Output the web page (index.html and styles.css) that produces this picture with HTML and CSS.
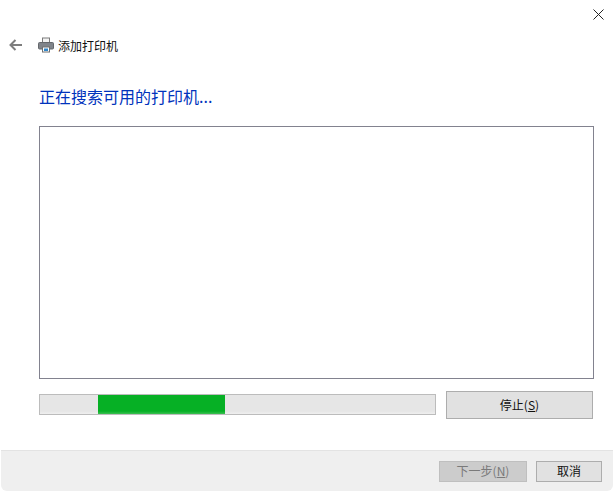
FILE: index.html
```html
<html>
<head>
  <meta charset="utf-8">
  <link rel="stylesheet" href="styles.css">
</head>
<body>
  <div class="dialog">
    <div class="close-row">
      <svg class="close" width="11" height="11" viewBox="0 0 11 11"><path d="M.5.5l10 10M10.5.5l-10 10" stroke="#222" stroke-width="1" fill="none"/></svg>
    </div>
    <div class="nav">
      <svg class="back" width="14" height="12" viewBox="0 0 14 12"><path d="M6.5 1L1.5 6l5 5M1.5 6H13" stroke="#7d7d7d" stroke-width="2" fill="none"/></svg>
      <svg class="printer" width="16" height="16" viewBox="0 0 16 16">
        <rect x="4.5" y="1" width="7" height="5" fill="#f4f4f4" stroke="#7a7a7a"/>
        <rect x=".5" y="5.5" width="15" height="6.5" rx="1" fill="#80848a" stroke="#65686c"/>
        <rect x="4.5" y="10" width="7" height="5" fill="#fff" stroke="#707070"/>
        <rect x="6" y="11.5" width="4" height="2.5" fill="#2f86c9"/>
      </svg>
      <span class="nav-title">添加打印机</span>
    </div>
    <div class="heading">正在搜索可用的打印机...</div>
    <div class="list"></div>
    <div class="status-row">
      <div class="progress">
        <div class="progress-fill"></div>
      </div>
      <div class="btn stop">停止(<u>S</u>)</div>
    </div>
    <div class="footer">
      <div class="btn next">下一步(<u>N</u>)</div>
      <div class="btn cancel">取消</div>
    </div>
  </div>
</body>
</html>
```

FILE: styles.css
```css
body {
  margin: 0;
  background-color: white;
  font-family: "Noto Sans CJK SC", "Liberation Sans", sans-serif;
  color: #111;
}
.dialog {
  width: 614px;
  height: 492px;
  overflow: hidden;
}
.close-row {
  height: 35px;
  display: flex;
  justify-content: flex-end;
  align-items: flex-start;
}
.close {
  margin: 9px 10px 0 0;
}
.nav {
  display: flex;
  align-items: center;
  height: 20px;
  padding-left: 9px;
}
.back {
  margin-right: 15px;
}
.printer {
  margin-right: 4px;
}
.nav-title {
  font-size: 12px;
}
.heading {
  margin: 28px 0 0 39px;
  height: 27px;
  line-height: 27px;
  font-size: 16px;
  color: #0033bc;
}
.list {
  margin: 16px 0 0 39px;
  width: 553px;
  height: 251px;
  border: 1px solid #82828f;
  background-color: white;
}
.status-row {
  display: flex;
  align-items: flex-start;
  margin: 12px 0 0 39px;
}
.progress {
  position: relative;
  box-sizing: border-box;
  margin-top: 3px;
  width: 397px;
  height: 21px;
  border: 1px solid #bcbcbc;
  background: linear-gradient(to bottom, #e6e6e6 85%, #efefef 100%);
}
.progress-fill {
  position: absolute;
  left: 58px;
  top: 0;
  width: 127px;
  height: 19px;
  background: linear-gradient(to bottom, #06b025 85%, #3cc052 100%);
}
.btn {
  box-sizing: border-box;
  display: flex;
  align-items: center;
  justify-content: center;
  padding-bottom: 2px;
  border: 1px solid #adadad;
  background-color: #e1e1e1;
  font-size: 12px;
}
.stop {
  margin-left: 10px;
  width: 147px;
  height: 28px;
}
.footer {
  display: flex;
  justify-content: flex-end;
  align-items: center;
  gap: 9px;
  margin: 31px 0 0 1px;
  width: 612px;
  height: 41px;
  box-sizing: border-box;
  padding-right: 11px;
  border-top: 1px solid #e3e3e3;
  border-radius: 0 0 6px 6px;
  background-color: #efefef;
}
.next {
  width: 88px;
  height: 21px;
  border-color: #bfbfbf;
  background-color: #cccccc;
  color: #7a7a7a;
}
.cancel {
  width: 66px;
  height: 21px;
}
```
